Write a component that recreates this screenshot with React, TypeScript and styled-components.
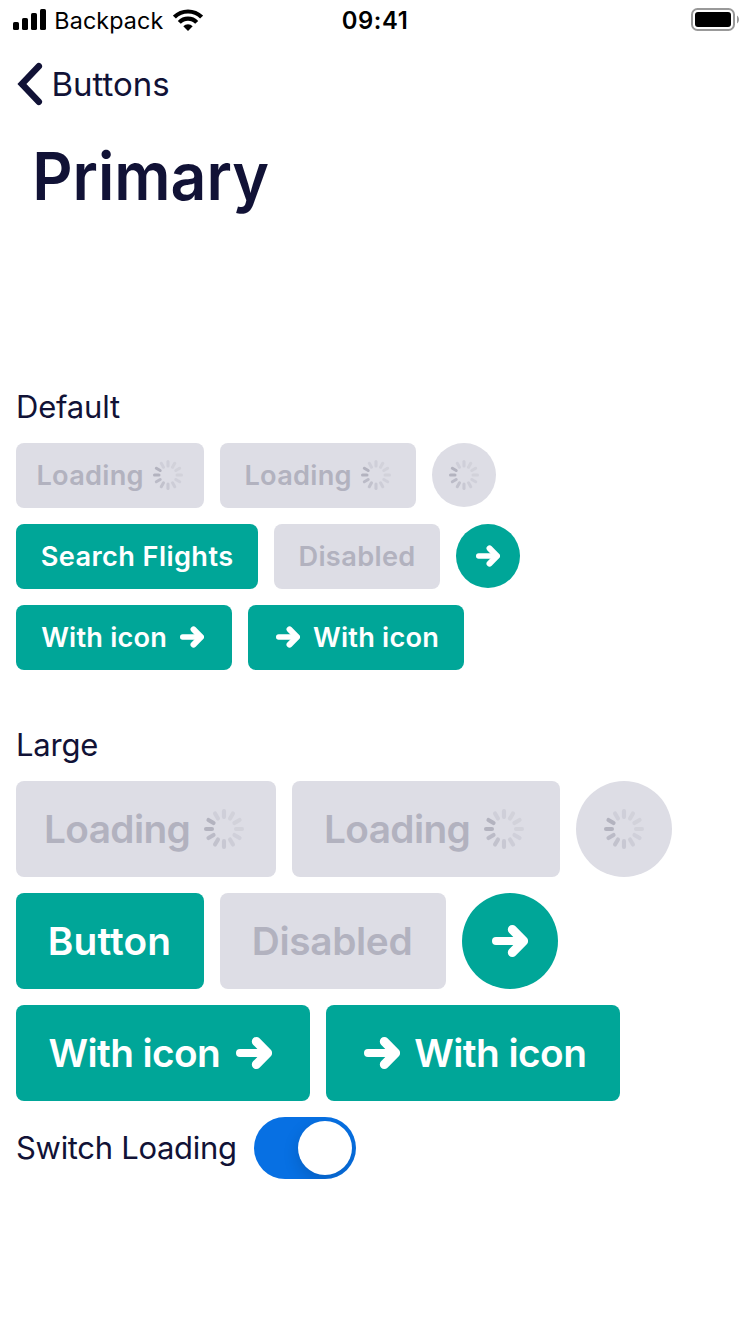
import React, { useState } from "react";
import styled, { createGlobalStyle } from "styled-components";

const GlobalStyle = createGlobalStyle`
  * { box-sizing: border-box; }
  body {
    margin: 0;
    background: #fff;
    color: #111236;
    font-family: Inter, "Liberation Sans", sans-serif;
  }
  svg { display: block; flex: none; }
`;

const Screen = styled.div`
  width: 750px;
  min-height: 1334px;
  background: #fff;
`;

const StatusBar = styled.header`
  display: grid;
  grid-template-columns: 1fr auto 1fr;
  align-items: center;
  height: 41px;
  padding: 0 11px 0 13px;
  color: #000;
  font-size: 23.3px;
  line-height: 41px;
`;

const Carrier = styled.div`
  display: flex;
  align-items: center;

  svg { margin-bottom: 1px; }
`;

const CarrierName = styled.span`
  margin: 0 9.3px 0 7.3px;
  letter-spacing: 0.13px;
`;

const Clock = styled.time`
  margin-right: 2px;
  font-size: 23.8px;
  font-weight: 600;
  letter-spacing: 0.6px;
`;

const BatterySlot = styled.div`
  display: flex;
  justify-content: flex-end;
  padding-bottom: 2px;
`;

const NavBar = styled.nav`
  display: flex;
  align-items: center;
  height: 87px;
  padding-left: 17px;

  svg { margin-bottom: 1px; }
`;

const BackLabel = styled.a`
  margin-left: 8.4px;
  color: #111236;
  font-size: 33px;
  line-height: 86px;
  height: 87px;
`;

const Title = styled.h1`
  margin: 0;
  padding-left: 34px;
  font-size: 66px;
  font-weight: 600;
  line-height: 96px;
  transform: scaleX(0.947);
  transform-origin: left;
`;

const Content = styled.main`
  padding: 163px 16px 0;
`;

const Section = styled.section`
  display: flex;
  flex-direction: column;
  gap: 16px;

  & + & { margin-top: 55px; }
`;

const Heading = styled.h2`
  margin: 0;
  font-size: 31px;
  font-weight: 400;
  line-height: 40px;
  letter-spacing: -0.2px;
`;

const Row = styled.div`
  display: flex;
  align-items: flex-start;
  gap: 16px;
`;

interface ButtonProps {
  $large?: boolean;
  $muted?: boolean;
  $width: number;
  $inset: number;
  $tracking?: number;
  $gap?: number;
}

const Button = styled.button<ButtonProps>`
  display: flex;
  align-items: center;
  gap: ${(p) => p.$gap ?? 0}px;
  width: ${(p) => p.$width}px;
  height: ${(p) => (p.$large ? 96 : 65)}px;
  padding: 0 0 0 ${(p) => p.$inset}px;
  border: 0;
  border-radius: 8px;
  background: ${(p) => (p.$muted ? "#dddde5" : "#00a698")};
  color: ${(p) => (p.$muted ? "#b2b2bf" : "#fff")};
  font-family: inherit;
  font-size: ${(p) => (p.$large ? 38.8 : 27.2)}px;
  font-weight: 600;
  line-height: ${(p) => (p.$large ? 96 : 65)}px;
  letter-spacing: ${(p) => p.$tracking ?? 0}px;
  text-align: left;
  white-space: nowrap;

  svg { margin-bottom: ${(p) => (p.$large ? 0 : 1)}px; }
`;

const RoundButton = styled.button<{ $large?: boolean; $muted?: boolean }>`
  display: flex;
  align-items: center;
  justify-content: center;
  width: ${(p) => (p.$large ? 96 : 64)}px;
  height: ${(p) => (p.$large ? 96 : 64)}px;
  padding: 0;
  border: 0;
  border-radius: 50%;
  background: ${(p) => (p.$muted ? "#dddde5" : "#00a698")};
  color: #fff;
`;

const Label = styled.span<{ $width: number }>`
  width: ${(p) => p.$width}px;
`;

const SwitchRow = styled.label`
  display: flex;
  height: 62px;
  font-size: 31px;
  line-height: 61px;
  letter-spacing: -0.31px;
`;

const SwitchText = styled.span`
  width: 238px;
`;

const Track = styled.button<{ $on: boolean }>`
  display: flex;
  align-items: center;
  justify-content: ${(p) => (p.$on ? "flex-end" : "flex-start")};
  width: 102px;
  height: 62px;
  padding: 4px;
  border: 0;
  border-radius: 31px;
  overflow: hidden;
  background: ${(p) => (p.$on ? "#0770e3" : "#dddde5")};
`;

const Thumb = styled.span`
  width: 54px;
  height: 54px;
  border-radius: 50%;
  background: #fff;
  box-shadow: 0 6px 16px rgba(0, 0, 0, 0.15);
`;

const petals = [0.3, 0.26, 0.26, 0.26, 0.28, 0.34, 0.46, 0.6, 0.74, 0.95, 0.95, 0.3];

const Spinner = ({ large }: { large?: boolean }) => {
  const size = large ? 40 : 30;
  return (
    <svg width={size} height={size} viewBox="-20 -20 40 40">
      {petals.map((opacity, i) => (
        <rect
          key={i}
          x={-2.05}
          y={-20}
          width={4.1}
          height={10}
          rx={2.05}
          fill="#b0b0bd"
          opacity={opacity}
          transform={`rotate(${i * 30})`}
        />
      ))}
    </svg>
  );
};

const Arrow = ({ large }: { large?: boolean }) => (
  <svg
    width={large ? 36 : 24}
    height={large ? 32 : 22}
    viewBox="0 0 36 32"
    fill="none"
    stroke="#fff"
    strokeLinecap="round"
    strokeLinejoin="round"
  >
    <path strokeWidth="8" d="M4 16H31" />
    <path strokeWidth="9" d="M20.3 4.5L31.6 16L20.3 27.5" />
  </svg>
);

const Signal = () => (
  <svg width="34" height="22" viewBox="0 0 34 22">
    <rect x="0" y="13" width="6" height="8" rx="1.6" />
    <rect x="9" y="9" width="6" height="12" rx="1.6" />
    <rect x="18" y="4" width="6" height="17" rx="1.6" />
    <rect x="27" y="0" width="6" height="21" rx="1.6" />
  </svg>
);

const Wifi = () => (
  <svg width="30" height="22" viewBox="0 0 30 22" fill="none" stroke="#000" strokeWidth="4.2">
    <path d="M1.4 8.1A19.3 19.3 0 0 1 28.6 8.1" />
    <path d="M6.3 13.4A12 12 0 0 1 23.7 13.4" />
    <path d="M15 22L10.3 17.3A6.7 6.7 0 0 1 19.7 17.3Z" fill="#000" stroke="none" />
  </svg>
);

const Battery = () => (
  <svg width="48" height="23" viewBox="0 0 48 23">
    <rect x="1" y="1" width="42" height="21" rx="5.5" fill="none" stroke="#999" strokeWidth="2" />
    <rect x="4" y="4" width="36" height="15" rx="3" />
    <path d="M46 7.5C48.6 9 48.6 14 46 15.5Z" fill="#999" />
  </svg>
);

const Chevron = () => (
  <svg width="26" height="44" viewBox="0 0 26 44" fill="none" stroke="#111236" strokeWidth="6.5" strokeLinecap="round">
    <path d="M21.8 4.2L4.9 22L21.8 39.8" />
  </svg>
);

export default function App() {
  const [loading, setLoading] = useState(true);

  return (
    <Screen>
      <GlobalStyle />
      <StatusBar>
        <Carrier>
          <Signal />
          <CarrierName>Backpack</CarrierName>
          <Wifi />
        </Carrier>
        <Clock>09:41</Clock>
        <BatterySlot>
          <Battery />
        </BatterySlot>
      </StatusBar>

      <NavBar>
        <Chevron />
        <BackLabel>Buttons</BackLabel>
      </NavBar>
      <Title>Primary</Title>

      <Content>
        <Section>
          <Heading>Default</Heading>
          <Row>
            <Button $muted $width={188} $inset={20.5} $tracking={0.25}>
              <Label $width={116.5}>Loading</Label>
              <Spinner />
            </Button>
            <Button $muted $width={196} $inset={24.5} $tracking={0.25}>
              <Label $width={116.5}>Loading</Label>
              <Spinner />
            </Button>
            <RoundButton $muted>
              <Spinner />
            </RoundButton>
          </Row>
          <Row>
            <Button $width={242} $inset={24.7} $tracking={0.39}>Search Flights</Button>
            <Button $muted $width={166} $inset={24.4} $tracking={0.36}>Disabled</Button>
            <RoundButton>
              <Arrow />
            </RoundButton>
          </Row>
          <Row>
            <Button $width={216} $inset={25.2} $tracking={0.19}>
              <Label $width={138.8}>With icon</Label>
              <Arrow />
            </Button>
            <Button $width={216} $inset={28} $gap={13} $tracking={0.22}>
              <Arrow />
              With icon
            </Button>
          </Row>
        </Section>

        <Section>
          <Heading>Large</Heading>
          <Row>
            <Button $large $muted $width={260} $inset={27.9} $tracking={-0.6}>
              <Label $width={160.1}>Loading</Label>
              <Spinner large />
            </Button>
            <Button $large $muted $width={268} $inset={31.9} $tracking={-0.6}>
              <Label $width={160.1}>Loading</Label>
              <Spinner large />
            </Button>
            <RoundButton $large $muted>
              <Spinner large />
            </RoundButton>
          </Row>
          <Row>
            <Button $large $width={188} $inset={31.8} $tracking={0.15}>Button</Button>
            <Button $large $muted $width={226} $inset={31.8} $tracking={-0.35}>Disabled</Button>
            <RoundButton $large>
              <Arrow large />
            </RoundButton>
          </Row>
          <Row>
            <Button $large $width={294} $inset={32.6} $tracking={-0.62}>
              <Label $width={187.4}>With icon</Label>
              <Arrow large />
            </Button>
            <Button $large $width={294} $inset={38} $gap={14.2} $tracking={-0.55}>
              <Arrow large />
              With icon
            </Button>
          </Row>
          <SwitchRow>
            <SwitchText>Switch Loading</SwitchText>
            <Track type="button" role="switch" aria-checked={loading} $on={loading} onClick={() => setLoading(!loading)}>
              <Thumb />
            </Track>
          </SwitchRow>
        </Section>
      </Content>
    </Screen>
  );
}
